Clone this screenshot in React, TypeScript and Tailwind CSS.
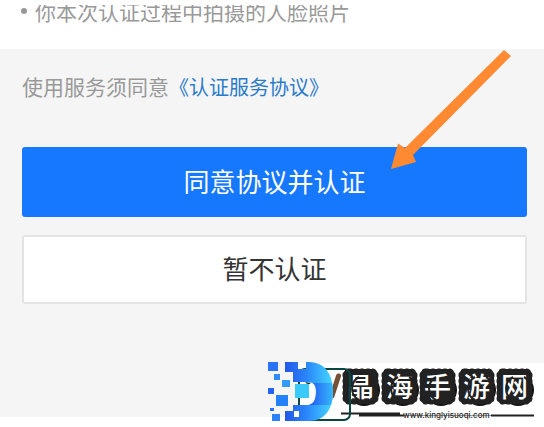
import React from 'react';

const squares = [
    { x: 268, y: 362, w: 10, h: 9, fill: '#2a72f6' },
    { x: 274, y: 374, w: 6, h: 6, fill: '#2f8dfb' },
    { x: 282, y: 380, w: 8, h: 7, fill: '#339cfb' },
    { x: 268, y: 388, w: 6, h: 6, fill: '#2665f3' },
    { x: 276, y: 395, w: 12, h: 11, fill: '#2581fb' },
    { x: 270, y: 408, w: 4, h: 3, fill: '#2a72f6' },
    { x: 272, y: 414, w: 8, h: 7, fill: '#2b83fa' },
];

const siteName = [
    { char: '晶', x: 343 },
    { char: '海', x: 382 },
    { char: '手', x: 420 },
    { char: '游', x: 459 },
    { char: '网', x: 497 },
];

const Arrow = () => (
    <svg className="absolute right-[15px] -top-[98px] w-[122px] h-[122px] pointer-events-none" viewBox="390 49 122 122" aria-hidden="true">
        <path d="M504 50 L511 56 L413 155 L416 162 L391 169 L398 143.500 L405 148 Z" fill="#ff8a32" />
    </svg>
);

const Logo = () => (
    <svg className="block w-[276px] h-[65px]" viewBox="268 362 276 65" role="img" aria-label="晶海手游网">
        <defs>
            <linearGradient id="logo-d" x1="0" y1="0" x2="1" y2="0">
                <stop offset="0" stopColor="#2457e8" />
                <stop offset="0.45" stopColor="#2a86fb" />
                <stop offset="1" stopColor="#44d8ff" />
            </linearGradient>
            <linearGradient id="logo-bar" x1="0" y1="0" x2="1" y2="0">
                <stop offset="0" stopColor="#2456f0" />
                <stop offset="1" stopColor="#35b8fd" />
            </linearGradient>
        </defs>
        <rect x="297" y="363" width="247" height="64" fill="#fff" />

        {/* Site name */}
        {siteName.map((s) => (
            <g key={s.char}>
                <circle cx={s.x + 21} cy="390" r="15" fill="none" stroke="#111" strokeWidth="2" />
                <rect x={s.x + 1} y="370" width="33" height="33" rx="5" fill="#222" stroke="#222" strokeWidth="2" />
                <rect x={s.x + 1} y="370" width="33" height="33" rx="5" fill="none" stroke="#222" strokeWidth="3" strokeLinecap="round" strokeDasharray="2 4" />
                <text x={s.x + 4} y="397" fontSize="27" fontWeight="500" fill="#fff" fontFamily="'Noto Sans CJK SC', sans-serif">{s.char}</text>
                <path d={`M${s.x + 16} 377 a13 13 0 0 0 0 23 M${s.x + 27} 377 a13 13 0 0 1 0 23`} fill="none" stroke="#222" strokeWidth="2" />
            </g>
        ))}
        <path d="M341 413.500 H400 M359 415.500 H404 M491 415.500 H534" stroke="#222" strokeWidth="2" />
        <path d="M404 415.500 H491" stroke="#999" strokeWidth="1" />
        <text x="403" y="418" fontSize="8" fontWeight="500" fill="#222" fontFamily="Inter, sans-serif">www.kinglyisuoqi.com</text>

        {/* Frame behind the mark */}
        <rect x="299" y="369" width="51" height="51" rx="6" fill="none" stroke="#0b4741" strokeWidth="2" />
        <path d="M338.500 376 L332 396" stroke="#765035" strokeWidth="5" strokeLinecap="round" />

        {/* Pixel mark */}
        {squares.map((s) => (
            <rect key={s.y} x={s.x} y={s.y} width={s.w} height={s.h} fill={s.fill} />
        ))}
        <path d="M285 362 H298 V369 H306 V362 H309 C326 362 333 376 333 391 C333 409 325 421 309 421 H285 V411 H293 V405 H308 C314 405 316 399 316 392 C316 385 314 382 306 382 H293 V372 H285 Z" fill="url(#logo-d)" />
        <path d="M313 383 H332 Q333 387 333 391 Q333 399 331 405 H309 Q316 403 316 392 Q316 385 313 383 Z" fill="url(#logo-bar)" />
        <rect x="294" y="411" width="5" height="6" fill="#fff" />
        <path d="M305 382 Q308 386 311 383 Z" fill="#0b4741" />
        <rect x="295" y="384" width="14" height="14" fill="#3acafa" />
    </svg>
);

const App: React.FC = () => {
    return (
        <div className="min-h-screen bg-white flex flex-col font-['Noto_Sans_CJK_SC',sans-serif]">
            <div className="h-[49px] pt-[5px]">
                <ul className="h-[22px] overflow-hidden flex flex-col justify-end px-[21px] text-[21px] leading-8 text-[#999999]">
                    <li className="flex items-center gap-2 shrink-0">
                        <span className="w-[6px] h-[6px] rounded-full bg-[#999999]" />
                        <span className="whitespace-nowrap">你本次认证过程中拍摄的人脸照片</span>
                    </li>
                </ul>
            </div>
            <main className="h-[368px] bg-[#f5f5f5] pl-[22px] pr-[17px] pt-[21px]">
                <p className="text-[21px] leading-8 text-[#999999] whitespace-nowrap">
                    使用服务须同意<a href="#agreement" className="text-[20px] text-[#2b7bcb]">《认证服务协议》</a>
                </p>
                <div className="relative mt-11 flex flex-col gap-[18px]">
                    <button type="button" className="h-[70px] pb-1 rounded-[3px] bg-[#1677ff] text-[26px] text-white">同意协议并认证</button>
                    <button type="button" className="h-[69px] pb-1 rounded-[3px] border-2 border-[#e4e4e4] bg-white text-[26px] text-[#333333]">暂不认证</button>
                    <Arrow />
                </div>
            </main>
            {/* Site watermark over the lower right corner */}
            <div className="absolute right-0 top-[362px]">
                <Logo />
            </div>
        </div>
    );
};

export default App;
